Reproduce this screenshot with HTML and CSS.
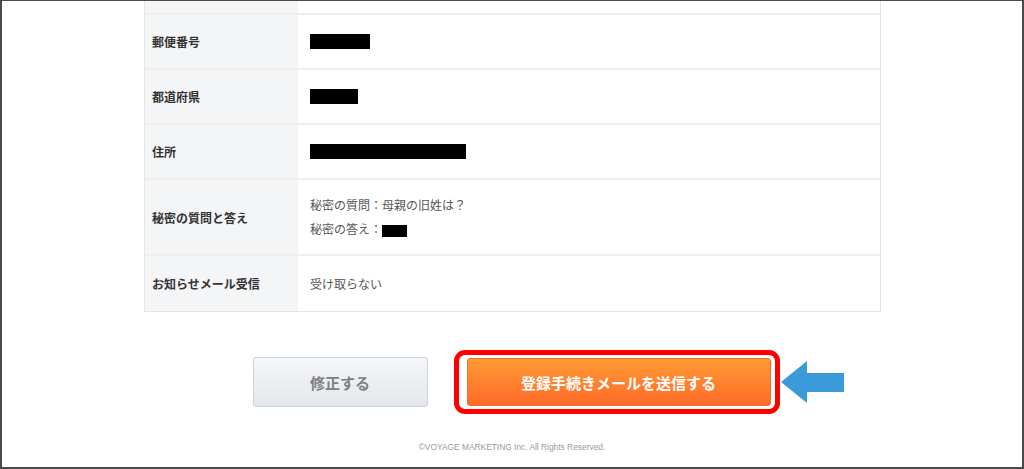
FILE: index.html
```html
<!DOCTYPE html>
<html lang="ja">
<head>
    <meta charset="UTF-8">
    <meta name="viewport" content="width=device-width, initial-scale=1.0">
    <title>登録内容の確認</title>
    <link rel="stylesheet" href="styles.css">
</head>
<body>
    <!-- 確認テーブル -->
    <div class="confirm-table">
        <div class="row row-cut">
            <div class="label"></div>
            <div class="value"></div>
        </div>
        <div class="row">
            <div class="label">郵便番号</div>
            <div class="value"><span class="mask mask-zip"></span></div>
        </div>
        <div class="row">
            <div class="label">都道府県</div>
            <div class="value"><span class="mask mask-pref"></span></div>
        </div>
        <div class="row">
            <div class="label">住所</div>
            <div class="value"><span class="mask mask-addr"></span></div>
        </div>
        <div class="row row-tall">
            <div class="label">秘密の質問と答え</div>
            <div class="value">
                <p>秘密の質問：母親の旧姓は？</p>
                <p>秘密の答え：<span class="mask mask-answer"></span></p>
            </div>
        </div>
        <div class="row row-last">
            <div class="label">お知らせメール受信</div>
            <div class="value">受け取らない</div>
        </div>
    </div>

    <!-- ボタン -->
    <div class="actions">
        <button class="btn btn-back">修正する</button>
        <div class="highlight">
            <button class="btn btn-send">登録手続きメールを送信する</button>
            <svg class="arrow" width="63" height="42" viewBox="0 0 63 42">
                <polygon points="0,21 26,0 26,12 63,12 63,31 26,31 26,42" fill="#3b9ad8"/>
            </svg>
        </div>
    </div>

    <footer class="footer">©VOYAGE MARKETING Inc. All Rights Reserved.</footer>
</body>
</html>
```

FILE: styles.css
```css
/* Базовые стили */
* {
    margin: 0;
    padding: 0;
    box-sizing: border-box;
}

html {
    background: #fff;
}

body {
    height: 469px;
    overflow: hidden;
    border: 2px solid #4a4a4a;
    border-top-width: 1px;
    background: #fff;
    font-family: 'Noto Sans CJK JP', 'Noto Sans', sans-serif;
    font-size: 12px;
    color: #444;
}

/* Таблица */
.confirm-table {
    width: 737px;
    margin-left: 142px;
    border: 1px solid #e4e4e4;
    border-top: none;
}

.row {
    display: grid;
    grid-template-columns: 153px 1fr;
    height: 55px;
    border-bottom: 2px solid #eeeeee;
}

.row-cut {
    height: 14px;
}

.row-tall {
    height: 76px;
}

.row-last {
    height: 55px;
    border-bottom: none;
}

.label {
    display: flex;
    align-items: center;
    padding-left: 7px;
    background: #f4f5f7;
    font-weight: bold;
    color: #333;
}

.value {
    display: flex;
    flex-direction: column;
    justify-content: center;
    padding-left: 12px;
    color: #555;
}

.value p {
    line-height: 24px;
}

.mask {
    display: inline-block;
    height: 15px;
    background: #000;
    vertical-align: middle;
}

.mask-zip { width: 60px; }
.mask-pref { width: 48px; }
.mask-addr { width: 156px; }
.mask-answer { width: 25px; height: 12px; }

/* Кнопки */
.actions {
    display: flex;
    justify-content: center;
    align-items: center;
    gap: 26px;
    margin-top: 38px;
    padding-left: 8px;
}

.btn {
    font-family: 'Noto Sans CJK JP', 'Noto Sans', sans-serif;
    font-size: 15px;
    font-weight: bold;
    border-radius: 3px;
    cursor: pointer;
}

.btn-back {
    width: 175px;
    height: 50px;
    color: #808080;
    background: linear-gradient(#f5f7f9, #e3e7eb);
    border: 1px solid #c9d1d9;
}

.highlight {
    position: relative;
    display: flex;
    padding: 3px 4px 3px 8px;
    border: 5px solid #ff0000;
    border-radius: 11px;
}

.btn-send {
    width: 304px;
    height: 48px;
    color: #fff;
    background: linear-gradient(#ff9b33, #ff6a29);
    border: 1px solid #ec7030;
}

.arrow {
    position: absolute;
    left: calc(100% + 6px);
    top: 6px;
}

.footer {
    margin-top: 28px;
    text-align: center;
    font-family: 'Liberation Sans', Arial, sans-serif;
    font-size: 8.4px;
    color: #9a9a9a;
}
```
